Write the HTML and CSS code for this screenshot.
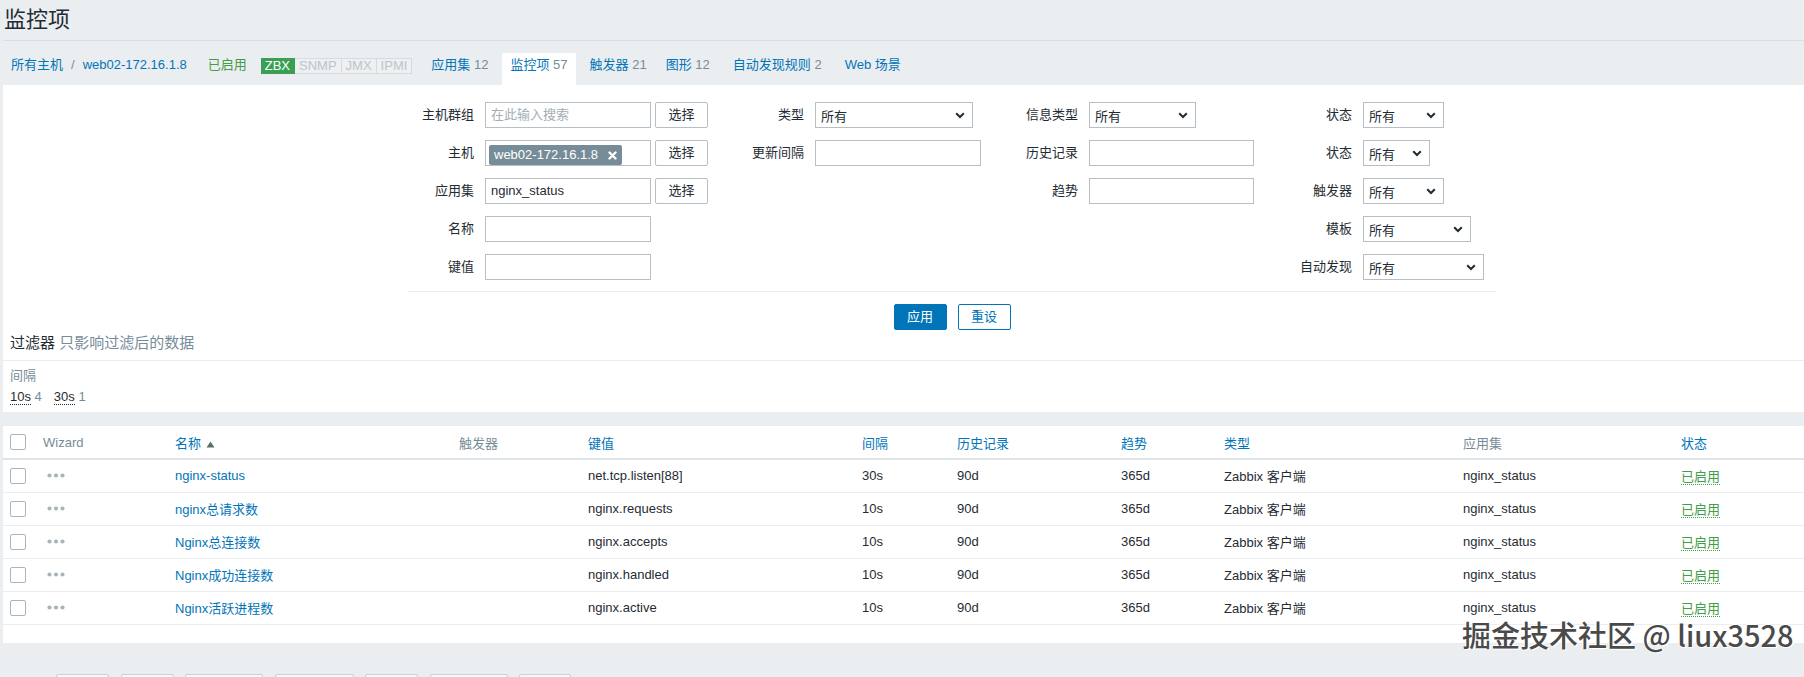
FILE: index.html
```html
<!DOCTYPE html>
<html lang="zh">
<head>
<meta charset="utf-8">
<title>监控项</title>
<link rel="stylesheet" href="styles.css">
</head>
<body>
<div class="page">
  <h1 class="title">监控项</h1>

  <nav class="nav">
    <div class="crumbs"><a class="lnk">所有主机</a><span class="sep">/</span><a class="lnk">web02-172.16.1.8</a></div>
    <span class="enabled">已启用</span>
    <div class="badges"><span class="b on">ZBX</span><span class="b">SNMP</span><span class="b">JMX</span><span class="b">IPMI</span></div>
    <a class="nav-item"><span class="lnk">应用集</span> <span class="cnt">12</span></a>
    <span class="nav-item active"><span class="lnk">监控项</span> <span class="cnt">57</span></span>
    <a class="nav-item after-active"><span class="lnk">触发器</span> <span class="cnt">21</span></a>
    <a class="nav-item"><span class="lnk">图形</span> <span class="cnt">12</span></a>
    <a class="nav-item wide"><span class="lnk">自动发现规则</span> <span class="cnt">2</span></a>
    <a class="nav-item wide"><span class="lnk">Web 场景</span></a>
  </nav>

  <section class="filter">
    <div class="filter-form">
      <div class="grid">
        <!-- row 1 -->
        <div class="lbl">主机群组</div>
        <div class="fld"><div class="inp ph">在此输入搜索</div><div class="btn-sel">选择</div></div>
        <div class="lbl">类型</div>
        <div class="fld"><div class="sel w158"><span>所有</span><svg class="chev" width="10" height="7" viewBox="0 0 10 7"><path d="M1.2 1.2 L5 5 L8.8 1.2" fill="none" stroke="#1f2c33" stroke-width="2"/></svg></div></div>
        <div class="lbl">信息类型</div>
        <div class="fld"><div class="sel w107"><span>所有</span><svg class="chev" width="10" height="7" viewBox="0 0 10 7"><path d="M1.2 1.2 L5 5 L8.8 1.2" fill="none" stroke="#1f2c33" stroke-width="2"/></svg></div></div>
        <div class="lbl">状态</div>
        <div class="fld"><div class="sel w81"><span>所有</span><svg class="chev" width="10" height="7" viewBox="0 0 10 7"><path d="M1.2 1.2 L5 5 L8.8 1.2" fill="none" stroke="#1f2c33" stroke-width="2"/></svg></div></div>

        <!-- row 2 -->
        <div class="lbl">主机</div>
        <div class="fld"><div class="inp chip-box"><span class="chip">web02-172.16.1.8<svg class="x" width="9" height="9" viewBox="0 0 9 9"><path d="M1.5 1.5 L7.5 7.5 M7.5 1.5 L1.5 7.5" stroke="#fff" stroke-width="2.4" stroke-linecap="round"/></svg></span></div><div class="btn-sel">选择</div></div>
        <div class="lbl">更新间隔</div>
        <div class="fld"><div class="inp"></div></div>
        <div class="lbl">历史记录</div>
        <div class="fld"><div class="inp w165"></div></div>
        <div class="lbl">状态</div>
        <div class="fld"><div class="sel w67"><span>所有</span><svg class="chev" width="10" height="7" viewBox="0 0 10 7"><path d="M1.2 1.2 L5 5 L8.8 1.2" fill="none" stroke="#1f2c33" stroke-width="2"/></svg></div></div>

        <!-- row 3 -->
        <div class="lbl">应用集</div>
        <div class="fld"><div class="inp">nginx_status</div><div class="btn-sel">选择</div></div>
        <div></div><div></div>
        <div class="lbl">趋势</div>
        <div class="fld"><div class="inp w165"></div></div>
        <div class="lbl">触发器</div>
        <div class="fld"><div class="sel w81"><span>所有</span><svg class="chev" width="10" height="7" viewBox="0 0 10 7"><path d="M1.2 1.2 L5 5 L8.8 1.2" fill="none" stroke="#1f2c33" stroke-width="2"/></svg></div></div>

        <!-- row 4 -->
        <div class="lbl">名称</div>
        <div class="fld"><div class="inp"></div></div>
        <div></div><div></div><div></div><div></div>
        <div class="lbl">模板</div>
        <div class="fld"><div class="sel w108"><span>所有</span><svg class="chev" width="10" height="7" viewBox="0 0 10 7"><path d="M1.2 1.2 L5 5 L8.8 1.2" fill="none" stroke="#1f2c33" stroke-width="2"/></svg></div></div>

        <!-- row 5 -->
        <div class="lbl">键值</div>
        <div class="fld"><div class="inp"></div></div>
        <div></div><div></div><div></div><div></div>
        <div class="lbl">自动发现</div>
        <div class="fld"><div class="sel w121"><span>所有</span><svg class="chev" width="10" height="7" viewBox="0 0 10 7"><path d="M1.2 1.2 L5 5 L8.8 1.2" fill="none" stroke="#1f2c33" stroke-width="2"/></svg></div></div>
      </div>
      <div class="actions">
        <button class="btn primary">应用</button>
        <button class="btn outline">重设</button>
      </div>
    </div>

    <div class="sub-head">过滤器 <span class="hint">只影响过滤后的数据</span></div>
    <div class="sub-body">
      <div class="sub-label">间隔</div>
      <div class="sub-opts">
        <span><a class="dot">10s</a> <span class="cnt">4</span></span>
        <span><a class="dot">30s</a> <span class="cnt">1</span></span>
      </div>
    </div>
  </section>

  <section class="tbl-panel">
    <table class="items">
      <colgroup>
        <col class="c0"><col class="c1"><col class="c2"><col class="c3"><col class="c4"><col class="c5"><col class="c6"><col class="c7"><col class="c8"><col class="c9"><col class="c10">
      </colgroup>
      <thead>
        <tr>
          <th class="first"><span class="cb"></span></th>
          <th>Wizard</th>
          <th><a class="lnk">名称</a> <svg class="sort" width="9" height="7" viewBox="0 0 9 7"><path d="M4.5 0.5 L8.5 6.5 L0.5 6.5 Z" fill="#5d6b72"/></svg></th>
          <th>触发器</th>
          <th><a class="lnk">键值</a></th>
          <th><a class="lnk">间隔</a></th>
          <th><a class="lnk">历史记录</a></th>
          <th><a class="lnk">趋势</a></th>
          <th><a class="lnk">类型</a></th>
          <th>应用集</th>
          <th><a class="lnk">状态</a></th>
        </tr>
      </thead>
      <tbody>
        <tr>
          <td class="first"><span class="cb"></span></td>
          <td><svg class="dots" width="18" height="5" viewBox="0 0 18 5"><circle cx="2.5" cy="2.5" r="2.1" fill="#a9b3b8"/><circle cx="9" cy="2.5" r="2.1" fill="#a9b3b8"/><circle cx="15.5" cy="2.5" r="2.1" fill="#a9b3b8"/></svg></td>
          <td><a class="lnk">nginx-status</a></td>
          <td></td>
          <td>net.tcp.listen[88]</td>
          <td>30s</td>
          <td>90d</td>
          <td>365d</td>
          <td>Zabbix 客户端</td>
          <td>nginx_status</td>
          <td><a class="ok">已启用</a></td>
        </tr>
        <tr>
          <td class="first"><span class="cb"></span></td>
          <td><svg class="dots" width="18" height="5" viewBox="0 0 18 5"><circle cx="2.5" cy="2.5" r="2.1" fill="#a9b3b8"/><circle cx="9" cy="2.5" r="2.1" fill="#a9b3b8"/><circle cx="15.5" cy="2.5" r="2.1" fill="#a9b3b8"/></svg></td>
          <td><a class="lnk">nginx总请求数</a></td>
          <td></td>
          <td>nginx.requests</td>
          <td>10s</td>
          <td>90d</td>
          <td>365d</td>
          <td>Zabbix 客户端</td>
          <td>nginx_status</td>
          <td><a class="ok">已启用</a></td>
        </tr>
        <tr>
          <td class="first"><span class="cb"></span></td>
          <td><svg class="dots" width="18" height="5" viewBox="0 0 18 5"><circle cx="2.5" cy="2.5" r="2.1" fill="#a9b3b8"/><circle cx="9" cy="2.5" r="2.1" fill="#a9b3b8"/><circle cx="15.5" cy="2.5" r="2.1" fill="#a9b3b8"/></svg></td>
          <td><a class="lnk">Nginx总连接数</a></td>
          <td></td>
          <td>nginx.accepts</td>
          <td>10s</td>
          <td>90d</td>
          <td>365d</td>
          <td>Zabbix 客户端</td>
          <td>nginx_status</td>
          <td><a class="ok">已启用</a></td>
        </tr>
        <tr>
          <td class="first"><span class="cb"></span></td>
          <td><svg class="dots" width="18" height="5" viewBox="0 0 18 5"><circle cx="2.5" cy="2.5" r="2.1" fill="#a9b3b8"/><circle cx="9" cy="2.5" r="2.1" fill="#a9b3b8"/><circle cx="15.5" cy="2.5" r="2.1" fill="#a9b3b8"/></svg></td>
          <td><a class="lnk">Nginx成功连接数</a></td>
          <td></td>
          <td>nginx.handled</td>
          <td>10s</td>
          <td>90d</td>
          <td>365d</td>
          <td>Zabbix 客户端</td>
          <td>nginx_status</td>
          <td><a class="ok">已启用</a></td>
        </tr>
        <tr>
          <td class="first"><span class="cb"></span></td>
          <td><svg class="dots" width="18" height="5" viewBox="0 0 18 5"><circle cx="2.5" cy="2.5" r="2.1" fill="#a9b3b8"/><circle cx="9" cy="2.5" r="2.1" fill="#a9b3b8"/><circle cx="15.5" cy="2.5" r="2.1" fill="#a9b3b8"/></svg></td>
          <td><a class="lnk">Nginx活跃进程数</a></td>
          <td></td>
          <td>nginx.active</td>
          <td>10s</td>
          <td>90d</td>
          <td>365d</td>
          <td>Zabbix 客户端</td>
          <td>nginx_status</td>
          <td><a class="ok">已启用</a></td>
        </tr>
      </tbody>
    </table>
  </section>

  <div class="mass">
    <button class="mbtn" aria-label="启用"></button>
    <button class="mbtn" aria-label="禁用"></button>
    <button class="mbtn w78" aria-label="现在检查"></button>
    <button class="mbtn w79" aria-label="清除历史"></button>
    <button class="mbtn" aria-label="复制"></button>
    <button class="mbtn w78" aria-label="批量更新"></button>
    <button class="mbtn w52" aria-label="删除"></button>
  </div>
</div>

<div class="watermark">掘金技术社区 @ liux3528</div>
</body>
</html>
```

FILE: styles.css
```css
* { box-sizing: border-box; }

html, body {
  margin: 0;
  padding: 0;
  overflow: hidden;
}

body {
  width: 1804px;
  height: 677px;
  position: relative;
  background: #ebeef0;
  color: #1f2c33;
  font-family: "Liberation Sans", Arial, "Noto Sans CJK SC", sans-serif;
  font-size: 13px;
}

.page {
  margin-left: 3px;
}

a { text-decoration: none; }

.lnk { color: #0275b8; }
.cnt { color: #768d99; }

/* ---------- title ---------- */
.title {
  margin: 0;
  height: 41px;
  padding: 5px 0 0 1px;
  border-bottom: 1px solid #d9dee1;
  font-size: 22px;
  font-weight: normal;
  line-height: 30px;
  color: #1f2c33;
}

/* ---------- nav ---------- */
.nav {
  display: flex;
  align-items: flex-start;
  height: 44px;
  padding: 12px 0 0 8px;
  line-height: 16px;
  white-space: nowrap;
}

.nav > * { padding-top: 4px; }

.crumbs .sep {
  color: #768d99;
  margin: 0 8px 0 8px;
}

.enabled {
  margin-left: 21px;
  color: #429e47;
}

.badges {
  display: flex;
  margin-left: 14px;
  padding-top: 5px;
}

.b {
  display: block;
  padding: 0 4px;
  line-height: 14px;
  border: 1px solid #d5dbde;
  border-left: none;
  background: #eef0f2;
  color: #bcc5ca;
}

.b.on {
  background: #3a9f55;
  border-color: #3a9f55;
  color: #fff;
}

.nav-item { margin-left: 19px; }

.nav-item.active {
  margin-left: 14px;
  height: 32px;
  padding: 4px 8px 12px;
  background: #fff;
}

.nav-item.after-active { margin-left: 14px; }
.nav-item.wide { margin-left: 23px; }

/* ---------- filter ---------- */
.filter {
  background: #fff;
}

.filter-form {
  width: 1088px;
  margin-left: 405px;
  padding-top: 17px;
}

.grid {
  display: grid;
  grid-template-columns: 77px 245px 85px 185px 89px 201px 73px 133px;
  grid-auto-rows: 26px;
  row-gap: 12px;
}

.lbl {
  padding-right: 11px;
  text-align: right;
  line-height: 26px;
  white-space: nowrap;
}

.fld {
  display: flex;
  align-items: center;
}

.inp {
  width: 166px;
  height: 26px;
  padding: 0 5px;
  border: 1px solid #b7bfc4;
  background: #fff;
  line-height: 24px;
  white-space: nowrap;
}

.inp.w165 { width: 165px; }
.inp.ph { color: #a3aeb4; }

.chip-box {
  padding: 2px 3px;
}

.chip {
  display: inline-flex;
  align-items: center;
  height: 20px;
  padding: 0 5px;
  border-radius: 2px;
  background: #768d99;
  color: #fff;
  line-height: 20px;
}

.chip .x { margin-left: 10px; }

.btn-sel {
  width: 53px;
  height: 26px;
  margin-left: 4px;
  border: 1px solid #b7bfc4;
  border-radius: 2px;
  background: #fff;
  text-align: center;
  line-height: 24px;
}

.sel {
  display: flex;
  align-items: center;
  justify-content: space-between;
  height: 26px;
  padding: 0 7px 0 5px;
  border: 1px solid #b7bfc4;
  background: #fff;
}

.sel.w158 { width: 158px; }
.sel.w107 { width: 107px; }
.sel.w81 { width: 81px; }
.sel.w67 { width: 67px; }
.sel.w108 { width: 108px; }
.sel.w121 { width: 121px; }

.actions {
  display: flex;
  justify-content: center;
  gap: 11px;
  margin-top: 11px;
  padding-top: 12px;
  border-top: 1px solid #ebeef0;
}

.btn {
  width: 53px;
  height: 26px;
  border-radius: 2px;
  font: inherit;
  line-height: 24px;
  padding: 0;
}

.btn.primary {
  background: #0275b8;
  border: 1px solid #0275b8;
  color: #fff;
}

.btn.outline {
  background: #fff;
  border: 1px solid #0275b8;
  color: #0275b8;
}

.sub-head {
  margin-top: 3px;
  padding: 0 0 7px 7px;
  border-bottom: 1px solid #ebeef0;
  font-size: 15px;
  line-height: 20px;
}

.sub-head .hint { color: #768d99; }

.sub-body {
  padding: 6px 0 6px 7px;
  line-height: 18px;
}

.sub-label { color: #768d99; }

.sub-opts {
  display: flex;
  gap: 12px;
  margin-top: 3px;
}

.dot {
  color: #1f2c33;
  border-bottom: 1px dotted #1f2c33;
}

/* ---------- table ---------- */
.tbl-panel {
  margin-top: 14px;
  padding-bottom: 18px;
  background: #fff;
}

.items {
  width: 1801px;
  border-collapse: collapse;
  table-layout: fixed;
}

.c0 { width: 35px; }
.c1 { width: 132px; }
.c2 { width: 284px; }
.c3 { width: 129px; }
.c4 { width: 274px; }
.c5 { width: 95px; }
.c6 { width: 164px; }
.c7 { width: 103px; }
.c8 { width: 239px; }
.c9 { width: 218px; }
.c10 { width: 128px; }

.items th {
  height: 33px;
  padding: 0 0 0 5px;
  border-bottom: 2px solid #dfe4e7;
  text-align: left;
  font-weight: normal;
  color: #768d99;
  white-space: nowrap;
}

.items td {
  height: 33px;
  padding: 0 0 0 5px;
  border-bottom: 1px solid #ebeef0;
  white-space: nowrap;
}

.items .first { padding-left: 7px; }

.cb {
  display: inline-block;
  width: 16px;
  height: 16px;
  border: 1px solid #aab6bc;
  border-radius: 2px;
  background: #fff;
  vertical-align: middle;
}

.sort {
  vertical-align: 0;
  margin-left: 1px;
}

.dots {
  display: block;
  margin-left: 4px;
}

.ok {
  color: #429e47;
  border-bottom: 1px dotted #429e47;
}

/* ---------- mass actions ---------- */
.mass {
  display: flex;
  gap: 11.5px;
  margin-top: 31px;
  padding-left: 53px;
}

.mbtn {
  width: 53px;
  height: 26px;
  padding: 0;
  border: 1px solid #c9d1d5;
  border-radius: 2px;
  background: #f7f8f9;
}

.mbtn.w78 { width: 78px; }
.mbtn.w79 { width: 79px; }
.mbtn.w52 { width: 52px; }

/* ---------- watermark overlay ---------- */
.watermark {
  position: absolute;
  left: 1462px;
  top: 616px;
  font-family: "Noto Sans CJK SC", sans-serif;
  font-size: 29px;
  line-height: 36px;
  font-weight: 500;
  color: #4a4a4a;
  white-space: nowrap;
  text-shadow: 0 0 2px #fff, 1px 1px 0 #fff, -1px -1px 0 #fff;
}
```
